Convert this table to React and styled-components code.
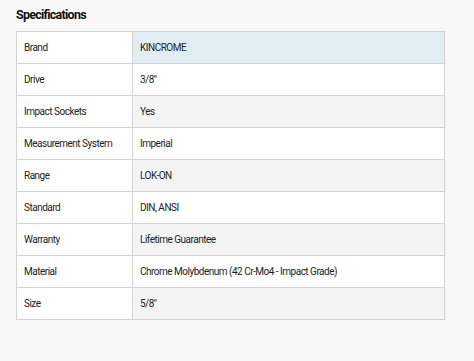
import React from 'react';
import styled, { createGlobalStyle } from 'styled-components';

const GlobalStyle = createGlobalStyle`
  html, body {
    margin: 0;
    padding: 0;
    background: #f8f8f8;
  }
  body {
    font-family: Roboto, "Liberation Sans", sans-serif;
    color: #222;
  }
`;

const Wrapper = styled.section`
  padding: 7px 30px 0 16px;
`;

const Title = styled.h2`
  margin: 0 0 8px;
  font-size: 12.5px;
  line-height: 16px;
  font-weight: 700;
  letter-spacing: -0.75px;
  color: #111;
`;

const Table = styled.table`
  width: 429px;
  border-collapse: collapse;
  font-size: 10px;
  letter-spacing: -0.5px;
`;

const Row = styled.tr``;

const Label = styled.th`
  width: 101px;
  height: 31px;
  padding: 0 7px;
  text-align: left;
  font-weight: 400;
  white-space: nowrap;
  background: #fff;
  border: 1px solid #d3d3d3;
`;

const Value = styled.td`
  height: 31px;
  padding: 0 7px;
  background: ${props => props.highlight ? '#e2edf3' : props.striped ? '#f4f4f4' : '#fff'};
  border: 1px solid #d3d3d3;
`;

const specs = [
  ['Brand', 'KINCROME'],
  ['Drive', '3/8"'],
  ['Impact Sockets', 'Yes'],
  ['Measurement System', 'Imperial'],
  ['Range', 'LOK-ON'],
  ['Standard', 'DIN, ANSI'],
  ['Warranty', 'Lifetime Guarantee'],
  ['Material', 'Chrome Molybdenum (42 Cr-Mo4 - Impact Grade)'],
  ['Size', '5/8"']
];

const App = () => (
  <>
    <GlobalStyle />
    <Wrapper>
      <Title>Specifications</Title>
      <Table>
        <tbody>
          {specs.map(([label, value], index) => (
            <Row key={label}>
              <Label>{label}</Label>
              <Value highlight={index === 0} striped={index % 2 === 0}>{value}</Value>
            </Row>
          ))}
        </tbody>
      </Table>
    </Wrapper>
  </>
);

export default App;
